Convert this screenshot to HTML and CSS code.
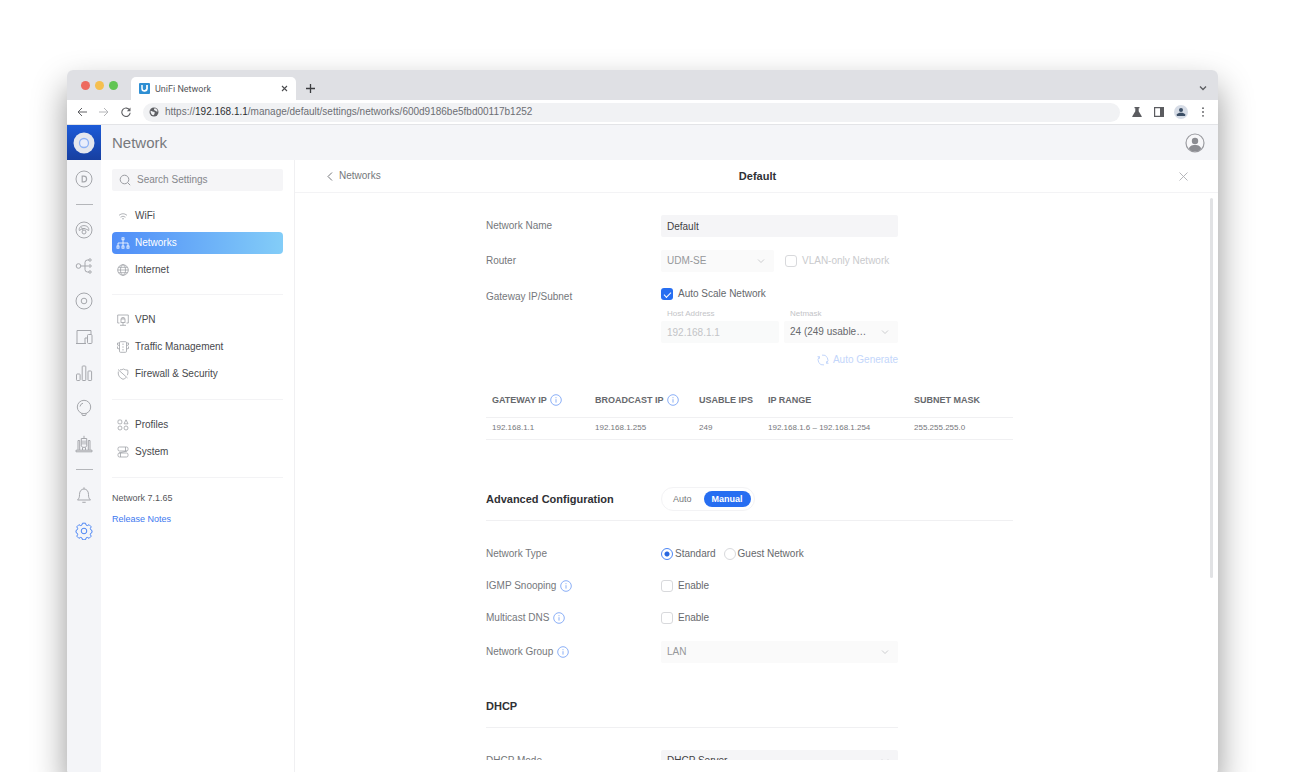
FILE: index.html
```html
<!DOCTYPE html>
<html lang="en">
<head>
  <meta charset="UTF-8">
  <meta name="viewport" content="width=device-width, initial-scale=1.0">
  <title>UniFi Network</title>
  <link rel="stylesheet" href="styles.css">
</head>
<body>
  <!-- Shared icons -->
  <svg class="sprite" aria-hidden="true">
    <symbol id="info" viewBox="0 0 12 12">
      <circle cx="6" cy="6" r="5.3" fill="none" stroke="currentColor" stroke-width="0.9"/>
      <path d="M6 5.2v3.4M6 3.2v1" stroke="currentColor" stroke-width="0.9"/>
    </symbol>
    <symbol id="chevron" viewBox="0 0 8 8">
      <path d="M1 2.5l3 3 3-3" fill="none" stroke="currentColor" stroke-width="0.9"/>
    </symbol>
  </svg>

  <div class="window">
    <div class="tabs">
      <div class="lights"><i></i><i></i><i></i></div>
      <div class="tab">
        <svg class="favicon" viewBox="0 0 11 11"><rect width="11" height="11" rx="1" fill="#2f8fd3"/><path d="M3 2v3.500a2.500 2.500 0 0 0 5 0V2" fill="none" stroke="#fff" stroke-width="1.500"/><path d="M8 2v4L5 8" fill="none" stroke="#fff"/></svg>
        <span>UniFi Network</span>
        <button aria-label="Close tab"><svg width="7" height="7" viewBox="0 0 7 7"><path d="M1 1l5 5M6 1L1 6" stroke="#4c4d50" stroke-width="1.100"/></svg></button>
      </div>
      <button class="new-tab" aria-label="New tab"><svg width="9" height="9" viewBox="0 0 9 9"><path d="M4.500 0v9M0 4.500h9" stroke="#3c3d40" stroke-width="1.300"/></svg></button>
      <button class="tab-list" aria-label="Search tabs"><svg width="8" height="8" viewBox="0 0 8 8"><path d="M1 2.500l3 3 3-3" fill="none" stroke="#5b5c60" stroke-width="1.300"/></svg></button>
    </div>

    <div class="toolbar">
      <button aria-label="Back"><svg viewBox="0 0 10 10"><path d="M10 5H1M5 1L1 5l4 4" fill="none" stroke="#606165"/></svg></button>
      <button aria-label="Forward"><svg viewBox="0 0 10 10"><path d="M0 5h9M5 1l4 4-4 4" fill="none" stroke="#b4b5b8"/></svg></button>
      <button aria-label="Reload"><svg viewBox="0 0 10 10"><path d="M8.700 3.200A4.200 4.200 0 1 0 9.200 5.800" fill="none" stroke="#606165" stroke-width="1.100"/><path d="M9.500 .5v3.700H5.800z" fill="#606165"/></svg></button>
      <div class="address">
        <svg viewBox="0 0 10 10"><circle cx="5" cy="5" r="4.500" fill="#5f6064"/><path d="M1.500 3.700c1.500 0 2 1.100 3.300 1.100S6 7 4.500 8.300C3 8 1.500 6.500 1.500 3.700zM5.500 1.200c1.800.2 3 1.600 3.100 3.200-1.300.4-1.900-.5-2.600-.9S4.500 3 5.500 1.200z" fill="#f1f2f4"/></svg>
        <span>https://<b>192.168.1.1</b>/manage/default/settings/networks/600d9186be5fbd00117b1252</span>
      </div>
      <div class="extras">
        <button aria-label="Labs"><svg viewBox="0 0 10 10"><path d="M2.500 0h5v1.200h-.8v3L9.700 9.200V10H.3v-.8l3-5v-3h-.8z" fill="#5b5c60"/></svg></button>
        <button aria-label="Side panel"><svg viewBox="0 0 10 10"><path d="M.6.600h8.800v8.800H.6z" fill="none" stroke="#5b5c60" stroke-width="1.200"/><path d="M6 0h4v10H6z" fill="#5b5c60"/></svg></button>
        <button class="profile" aria-label="Profile"><svg viewBox="0 0 10 10"><circle cx="5" cy="3" r="2" fill="#3c4f66"/><path d="M.8 9V7.600C1.500 6.300 3 5.700 5 5.700s3.500.6 4.200 1.900V9z" fill="#3c4f66"/></svg></button>
        <button aria-label="More"><svg viewBox="0 0 10 10"><g fill="#5b5c60"><circle cx="5" cy="1.200" r=".9"/><circle cx="5" cy="5" r=".9"/><circle cx="5" cy="8.800" r=".9"/></g></svg></button>
      </div>
    </div>

    <header class="app-bar">
      <div class="logo"><svg viewBox="0 0 22 22"><circle cx="11" cy="11" r="10.500" fill="#e4e7ee"/><circle cx="11" cy="11" r="4.500" fill="#e9eefb" stroke="#8fb3f5" stroke-width="1.300"/></svg></div>
      <h1>Network</h1>
      <button aria-label="Account"><svg viewBox="0 0 20 20"><circle cx="10" cy="10" r="9" fill="#f7f7f9" stroke="#9b9ca1" stroke-width="1.200"/><circle cx="10" cy="8" r="3.200" fill="#8b8c91"/><path d="M4 16c0-2.500 2.500-4 6-4s6 1.500 6 4c-1.500 1.600-3.600 2.600-6 2.600S5.500 17.600 4 16z" fill="#8b8c91"/></svg></button>
    </header>

    <div class="app">
      <nav class="rail" aria-label="Main">
        <a href="#" aria-label="Site"><svg viewBox="0 0 18 18"><circle cx="9" cy="9" r="8"/><path d="M7.200 6.200h1.600a2.800 2.800 0 0 1 0 5.600H7.200z" stroke-width="1.200"/></svg></a>
        <hr>
        <div class="rail-group">
          <a href="#" aria-label="Dashboard"><svg viewBox="0 0 18 18"><circle cx="9" cy="9" r="8"/><path d="M4.300 9.500C3 3 15 3 13.700 9.500L11.800 8.500M4.300 9.500l2-1.200q2.700-2 5.500.2M6.500 6.300l1.700 3"/><circle cx="9" cy="11" r="2"/></svg></a>
          <a href="#" aria-label="Topology"><svg viewBox="0 0 18 18"><circle cx="3.500" cy="9" r="2.300"/><path d="M6 9h7M14 3h-1.500Q10 3 10 5.500v7Q10 15 12.500 15H14"/><circle cx="15" cy="3" r="1.200"/><circle cx="15" cy="9" r="1.200"/><circle cx="15" cy="15" r="1.200"/></svg></a>
          <a href="#" aria-label="Devices"><svg viewBox="0 0 18 18"><circle cx="9" cy="9" r="8"/><circle cx="9" cy="9" r="2.800"/></svg></a>
          <a href="#" aria-label="Clients"><svg viewBox="0 0 18 18"><path d="M9 15.500H1M2 15.500v-13h14v4M10 15.500V10h3M11 15.500H9"/><rect x="12.500" y="6.500" width="4.500" height="9" rx="1"/></svg></a>
          <a href="#" aria-label="Statistics"><svg viewBox="0 0 18 18"><rect x="1.500" y="10" width="3.600" height="6.500" rx=".7"/><rect x="7.200" y="2" width="3.600" height="14.500" rx=".7"/><rect x="13" y="7" width="3.600" height="9.500" rx=".7"/></svg></a>
          <a href="#" aria-label="Insights"><svg viewBox="0 0 18 18"><circle cx="9" cy="8" r="6.700"/><path d="M5 7.500a4 4 0 0 1 3-3.300M6.500 14.300L7.500 16.500h3l1-2.200"/></svg></a>
          <a href="#" aria-label="Hotspot"><svg viewBox="0 0 18 18"><path d="M1 16.800v-1.600h16v1.600zM6.300 3.500h5.400v7.300L10.500 12.300h-3L6.300 10.800zM9 .8v2.500M8 5.500v4M10 5.500v4M3 15V5.500h1.700V15M15 15V5.500h-1.700V15M7.500 12.500V15M10.500 12.500V15"/></svg></a>
        </div>
        <hr>
        <a href="#" aria-label="Notifications"><svg viewBox="0 0 18 18"><path d="M2.500 14c1.700-1.500 2-3 2-5.500 0-3.300 1.800-5.500 4.500-5.500s4.500 2.200 4.500 5.500c0 2.500.3 4 2 5.500zM9 3V1.300M7.300 16.300h3.400"/></svg></a>
        <a href="#" class="on" aria-label="Settings"><svg viewBox="0 0 18 18"><circle cx="9" cy="9" r="2.800"/><path d="M7.500 1.200h3l.6 1.900 1.200.5 1.800-.9 2.100 2.100-.9 1.800.5 1.200 1.200.7v2l-1.200.7-.5 1.200.9 1.800-2.100 2.100-1.800-.9-1.200.5-.6 1.900h-3l-.6-1.900-1.200-.5-1.800.9-2.100-2.100.9-1.800-.5-1.200L1 10.500v-2l1.200-.7.5-1.200-.9-1.800 2.100-2.100 1.800.9 1.200-.5z" stroke-linejoin="round"/></svg></a>
      </nav>

      <aside class="sidebar">
        <label class="search">
          <svg viewBox="0 0 12 12"><circle cx="5.500" cy="5.500" r="4.300"/><path d="M8.700 8.700l2.500 2.500"/></svg>
          <input type="text" placeholder="Search Settings" aria-label="Search Settings">
        </label>
        <nav aria-label="Settings">
          <ul>
            <li><a href="#"><svg viewBox="0 0 14 14"><path d="M3 6.300q4-3.200 8 0M4.500 8.200q2.500-2 5 0M6 10q1-.8 2 0"/></svg>WiFi</a></li>
            <li><a href="#" class="selected"><svg viewBox="0 0 14 14"><path d="M7 4v6M2 10V7h10v3"/><rect x="6" y="1.800" width="2" height="2"/><rect x="1" y="10" width="2" height="2.200"/><rect x="6" y="10" width="2" height="2.200"/><rect x="11" y="10" width="2" height="2.200"/></svg>Networks</a></li>
            <li><a href="#"><svg viewBox="0 0 14 14"><circle cx="7" cy="7" r="5.300"/><ellipse cx="7" cy="7" rx="2.500" ry="5.300"/><path d="M1.700 7h10.600M2.500 4.300h9M2.500 9.700h9"/></svg>Internet</a></li>
          </ul>
          <ul>
            <li><a href="#"><svg viewBox="0 0 14 14"><path d="M3.500 10H1.700V2h10.600v8h-1.800M4 12.300h6"/><rect x="5" y="6" width="4" height="3.500"/><path d="M5.800 6V4.600h2.400V6M7 9.500v2.800"/></svg>VPN</a></li>
            <li><a href="#"><svg viewBox="0 0 14 14"><rect x="3.500" y="1.700" width="7" height="10.600" rx="1"/><path d="M3.500 3h-2v2l2 .5M1.500 6.500v2l2 .5M10.500 3h2v2l-2 .5M12.500 6.500v2l-2 .5M7 3.500v1.500M7 6.300v1.500M7 9v1.500"/></svg>Traffic Management</a></li>
            <li><a href="#"><svg viewBox="0 0 14 14"><path d="M4 2.800Q6 3 7.500 2 9 3 11.800 3.200q.5 3-.4 5M10 10.500Q9 11.700 7 12.300 1.500 10 2.300 4.500M2 2.500l9.500 8.500"/></svg>Firewall &amp; Security</a></li>
          </ul>
          <ul>
            <li><a href="#"><svg viewBox="0 0 14 14"><rect x="2" y="2" width="3.800" height="3.800" rx="1"/><path d="M10 1.800l2 4H8z"/><circle cx="4" cy="10" r="2"/><circle cx="10" cy="10" r="2"/></svg>Profiles</a></li>
            <li><a href="#"><svg viewBox="0 0 14 14"><rect x="2" y="2" width="10" height="4" rx="1.500"/><rect x="2" y="8" width="10" height="4" rx="1.500"/><path d="M9.500 2v4M4.500 8v4M11 6L3 8"/></svg>System</a></li>
          </ul>
        </nav>
        <p>Network 7.1.65</p>
        <p><a href="#">Release Notes</a></p>
      </aside>

      <main>
        <div class="panel-head">
          <a href="#"><svg width="6" height="9" viewBox="0 0 6 9"><path d="M5 .5l-4 4 4 4" fill="none" stroke="currentColor"/></svg>Networks</a>
          <h2>Default</h2>
          <button aria-label="Close"><svg width="9" height="9" viewBox="0 0 9 9"><path d="M.5.5l8 8M8.500.5l-8 8" stroke="#aeafb3" stroke-width=".9"/></svg></button>
        </div>

        <div class="scroller">
          <form>
            <div class="row first">
              <label for="name">Network Name</label>
              <input class="field" id="name" type="text" value="Default">
            </div>
            <div class="row router">
              <label for="router">Router</label>
              <div class="pair">
                <div class="select dim"><select id="router" disabled><option>UDM-SE</option></select><svg><use href="#chevron"/></svg></div>
                <label class="check off"><input type="checkbox" disabled>VLAN-only Network</label>
              </div>
            </div>
            <div class="row gateway">
              <span>Gateway IP/Subnet</span>
              <div>
                <label class="check"><input type="checkbox" checked>Auto Scale Network</label>
                <div class="pair subnet">
                  <div class="stack">
                    <label for="host">Host Address</label>
                    <input class="field" id="host" type="text" value="192.168.1.1" disabled>
                  </div>
                  <div class="stack">
                    <label for="mask">Netmask</label>
                    <div class="select"><select id="mask"><option>24 (249 usable…</option></select><svg><use href="#chevron"/></svg></div>
                  </div>
                </div>
                <button class="generate" type="button" disabled><svg width="12" height="12" viewBox="0 0 12 12"><path d="M7 10.900A5 5 0 0 1 2.300 2.700M5 1.100A5 5 0 0 1 9.700 9.300M.5 2.700h2v2M11.500 9.300h-2v-2" fill="none" stroke="currentColor"/></svg>Auto Generate</button>
              </div>
            </div>

            <table>
              <thead>
                <tr>
                  <th class="c-gateway">Gateway IP <svg class="info"><use href="#info"/></svg></th>
                  <th class="c-broadcast">Broadcast IP <svg class="info"><use href="#info"/></svg></th>
                  <th class="c-usable">Usable IPs</th>
                  <th class="c-range">IP Range</th>
                  <th>Subnet Mask</th>
                </tr>
              </thead>
              <tbody>
                <tr>
                  <td>192.168.1.1</td>
                  <td>192.168.1.255</td>
                  <td>249</td>
                  <td>192.168.1.6 – 192.168.1.254</td>
                  <td>255.255.255.0</td>
                </tr>
              </tbody>
            </table>

            <div class="row section">
              <h3>Advanced Configuration</h3>
              <div class="toggle">
                <button type="button">Auto</button>
                <button type="button" class="active">Manual</button>
              </div>
            </div>

            <div class="row tight">
              <span>Network Type</span>
              <div class="radios">
                <label><input type="radio" name="type" checked>Standard</label>
                <label><input type="radio" name="type">Guest Network</label>
              </div>
            </div>
            <div class="row tight">
              <label for="igmp">IGMP Snooping <svg class="info"><use href="#info"/></svg></label>
              <label class="check"><input id="igmp" type="checkbox">Enable</label>
            </div>
            <div class="row tight">
              <label for="mdns">Multicast DNS <svg class="info"><use href="#info"/></svg></label>
              <label class="check"><input id="mdns" type="checkbox">Enable</label>
            </div>
            <div class="row group">
              <label for="group">Network Group <svg class="info"><use href="#info"/></svg></label>
              <div class="select dim"><select id="group" disabled><option>LAN</option></select><svg><use href="#chevron"/></svg></div>
            </div>

            <h3 class="dhcp">DHCP</h3>
            <div class="row">
              <label for="dhcp">DHCP Mode</label>
              <div class="select solid"><select id="dhcp"><option>DHCP Server</option></select><svg><use href="#chevron"/></svg></div>
            </div>
          </form>
          <div class="thumb"></div>
        </div>
      </main>
    </div>
  </div>
</body>
</html>
```
FILE: styles.css
```css
* {
  box-sizing: border-box;
}

body {
  margin: 0;
  height: 100vh;
  overflow: hidden;
  background: #fff;
  color: #75777b;
  font-family: "Liberation Sans", Arial, sans-serif;
  font-size: 10px;
  line-height: 14px;
}

h1, h2, h3, p, ul {
  margin: 0;
  padding: 0;
  list-style: none;
}

a {
  color: inherit;
  text-decoration: none;
}

button, input, select {
  margin: 0;
  padding: 0;
  border: 0;
  background: none;
  color: inherit;
  font: inherit;
}

button {
  display: flex;
  align-items: center;
  justify-content: center;
}

.sprite {
  position: absolute;
  width: 0;
  height: 0;
}

.window {
  display: flex;
  flex-direction: column;
  height: calc(100vh - 67px);
  margin: 70px 72px 0 67px;
  border-radius: 6px;
  overflow: hidden;
  background: #fff;
  box-shadow: 0 17px 34px rgba(0, 0, 0, 0.42);
}

/* Browser chrome */
.tabs {
  display: flex;
  align-items: flex-end;
  flex: 0 0 30px;
  padding: 0 11px 0 14px;
  background: #dfe0e4;
}

.lights {
  display: flex;
  gap: 5px;
  width: 50px;
  padding-bottom: 10px;
}

.lights i {
  width: 9px;
  height: 9px;
  border-radius: 50%;
  background: #ed6a5f;
}

.lights i:nth-child(2) { background: #f5bf4f; }
.lights i:nth-child(3) { background: #62c554; }

.tab {
  display: flex;
  align-items: center;
  gap: 5px;
  width: 165px;
  height: 23px;
  padding: 0 8px;
  border-radius: 5px 5px 0 0;
  background: #fff;
  color: #55565a;
  font-family: Roboto, sans-serif;
  font-size: 9px;
}

.tab button {
  margin-left: auto;
}

.favicon {
  width: 11px;
  height: 11px;
}

.new-tab {
  height: 24px;
  margin-left: 10px;
}

.tab-list {
  height: 24px;
  margin-left: auto;
}

.toolbar {
  display: flex;
  align-items: center;
  gap: 12px;
  flex: 0 0 25px;
  padding: 0 10px;
  border-bottom: 1px solid #e3e4e7;
}

.toolbar svg {
  width: 10px;
  height: 10px;
}

.address {
  display: flex;
  align-items: center;
  gap: 6px;
  flex: 1;
  height: 19px;
  padding-left: 6px;
  border-radius: 10px;
  background: #f1f2f4;
  color: #6c6e73;
}

.address b {
  color: #2d2e32;
  font-weight: 400;
}

.extras {
  display: flex;
  gap: 12px;
}

.profile {
  width: 14px;
  height: 14px;
  margin: -2px;
  border-radius: 50%;
  background: #d6dce6;
}

.app-bar {
  display: flex;
  align-items: center;
  flex: 0 0 35px;
  padding-right: 13px;
  background: #f4f5f8;
}

.app-bar h1 {
  margin-left: 11px;
  color: #77797d;
  font-size: 15px;
  font-weight: 400;
}

.app-bar button {
  margin-left: auto;
}

.app-bar button svg {
  width: 20px;
  height: 20px;
}

.logo {
  display: flex;
  align-items: center;
  justify-content: center;
  width: 34px;
  height: 35px;
  background: linear-gradient(#1d5bd8, #173fa0);
}

.logo svg {
  width: 22px;
  height: 22px;
}

.app {
  display: flex;
  flex: 1;
  min-height: 0;
}

/* Icon rail */
.rail {
  display: flex;
  flex-direction: column;
  align-items: center;
  flex: 0 0 34px;
  padding-top: 10px;
  background: #f4f5f8;
}

.rail svg {
  display: block;
  width: 18px;
  height: 18px;
  fill: none;
  stroke: #a5a7ac;
  stroke-width: 1;
}

.rail hr {
  width: 17px;
  height: 1px;
  margin: 16px 0;
  border: 0;
  background: #b4b6ba;
}

.rail-group {
  display: flex;
  flex-direction: column;
  justify-content: space-between;
  height: 232px;
}

.rail .on {
  margin-top: 18px;
}

.rail .on svg {
  stroke: #4c86f5;
}

/* Settings menu */
.sidebar {
  flex: 0 0 194px;
  padding: 9px 11px;
  border-right: 1px solid #f0f0f2;
}

.search {
  display: flex;
  align-items: center;
  gap: 6px;
  height: 22px;
  padding-left: 7px;
  border-radius: 2px;
  background: #f5f5f7;
}

.search svg {
  width: 12px;
  height: 12px;
  fill: none;
  stroke: #9a9ca1;
}

.search input {
  width: 130px;
}

.search input::placeholder {
  color: #85878c;
  opacity: 1;
}

.sidebar ul {
  display: flex;
  flex-direction: column;
  gap: 5px;
  padding: 14px 0;
  border-bottom: 1px solid #f3f3f5;
}

.sidebar ul:first-child {
  padding-bottom: 13px;
}

.sidebar li a {
  display: flex;
  align-items: center;
  gap: 5px;
  height: 22px;
  padding-left: 4px;
  border-radius: 4px;
  color: #48494d;
}

.sidebar li svg {
  width: 14px;
  height: 14px;
  fill: none;
  stroke: #a0a2a7;
  stroke-width: 0.8;
}

.sidebar li .selected {
  background: linear-gradient(90deg, #4f8df8, #83cdf8);
  color: #fff;
}

.sidebar li .selected svg {
  stroke: #fff;
}

.sidebar p {
  margin-top: 13px;
  font-size: 9px;
  color: #55565a;
}

.sidebar p + p {
  margin-top: 7px;
}

.sidebar p a {
  color: #3d78f0;
}

/* Content */
main {
  display: flex;
  flex-direction: column;
  flex: 1;
  min-width: 0;
  padding-bottom: 15px;
}

.panel-head {
  display: grid;
  grid-template-columns: 1fr auto 1fr;
  align-items: center;
  flex: 0 0 33px;
  padding: 0 30px 0 32px;
  border-bottom: 1px solid #f3f3f5;
}

.panel-head a {
  display: flex;
  align-items: center;
  gap: 6px;
}

.panel-head h2 {
  color: #303135;
  font-size: 11px;
  font-weight: 700;
}

.panel-head button {
  justify-self: end;
}

.scroller {
  position: relative;
  flex: 1;
  overflow: hidden;
  padding-right: 14px;
}

.thumb {
  position: absolute;
  top: 5px;
  right: 5px;
  width: 3px;
  height: 67%;
  border-radius: 2px;
  background: #e1e2e4;
}

form {
  max-width: 527px;
  margin: 0 auto;
}

.row {
  display: grid;
  grid-template-columns: 175px 237px;
  align-items: center;
}

.first {
  padding-top: 22px;
}

.router {
  margin-top: 13px;
}

.gateway {
  align-items: start;
  margin-top: 15px;
}

.gateway > span {
  padding-top: 3px;
}

.field,
.select {
  width: 100%;
  height: 22px;
  border-radius: 2px;
  background: #f5f5f7;
  color: #3f4044;
}

.field {
  padding: 0 6px;
}

.field:disabled {
  background: #f9fafa;
  color: #c3c4c7;
}

.select {
  position: relative;
  background: #fafafa;
  color: #66686c;
}

.select select {
  width: 100%;
  height: 22px;
  padding: 0 6px;
  appearance: none;
  opacity: 1;
}

.select svg {
  position: absolute;
  top: 7px;
  right: 9px;
  width: 8px;
  height: 8px;
  color: #c6c7ca;
  pointer-events: none;
}

.dim {
  color: #96989b;
}

.solid {
  background: #f5f5f7;
  color: #3f4044;
}

.pair {
  display: grid;
  grid-template-columns: 113px 1fr;
  gap: 11px;
}

.subnet {
  grid-template-columns: 118px 1fr;
  gap: 5px;
  margin-top: 6px;
}

.stack label {
  display: block;
  padding-left: 6px;
  color: #c3c4c7;
  font-size: 8px;
}

.check,
.radios label {
  display: flex;
  align-items: center;
  gap: 5px;
  color: #66686c;
}

.check input,
.radios input {
  flex: none;
  width: 12px;
  height: 12px;
  appearance: none;
  border: 1px solid #d8d9dc;
  border-radius: 3px;
  background: #fff;
}

.check input:checked {
  border: 0;
  background: #276ef1;
}

.check input:checked::before {
  content: "";
  display: block;
  width: 6px;
  height: 3px;
  margin: 4px 3px;
  border: solid #fff;
  border-width: 0 0 1px 1px;
  transform: rotate(-45deg);
}

.off {
  color: #c9cacd;
}

.radios {
  display: flex;
  gap: 8px;
}

.radios label {
  gap: 2px;
}

.radios input {
  border-radius: 50%;
}

.radios input:checked {
  border-color: #4c86f5;
  background: radial-gradient(circle, #2767e0 2px, #fff 3px);
}

.generate {
  gap: 4px;
  margin: 10px 0 0 auto;
  color: #c3d6fb;
}

.info {
  width: 12px;
  height: 12px;
  margin-left: 1px;
  color: #7ea6f5;
  vertical-align: -3px;
}

table {
  width: 100%;
  margin-top: 16px;
  border-collapse: collapse;
  table-layout: fixed;
}

th, td {
  padding: 0 0 0 6px;
  border-bottom: 1px solid #f0f0f2;
  text-align: left;
  white-space: nowrap;
}

th {
  height: 34px;
  color: #66686c;
  font-size: 9px;
  text-transform: uppercase;
}

td {
  height: 22px;
  font-size: 8px;
}

.c-gateway { width: 103px; }
.c-broadcast { width: 104px; }
.c-usable { width: 69px; }
.c-range { width: 146px; }

h3 {
  color: #303135;
  font-size: 11px;
  font-weight: 700;
}

.section {
  margin: 47px 0 17px;
  padding-bottom: 9px;
  border-bottom: 1px solid #f0f0f2;
}

.toggle {
  display: flex;
  justify-self: start;
  padding: 3px;
  border: 1px solid #f3f3f5;
  border-radius: 12px;
}

.toggle button {
  height: 16px;
  padding: 0 8px;
  border-radius: 8px;
  font-size: 9px;
}

.toggle button:first-child {
  margin-right: 4px;
}

.toggle .active {
  background: #276ef1;
  color: #fff;
  font-weight: 700;
}

.tight {
  height: 32px;
}

.group {
  margin-top: 7px;
}

.dhcp {
  width: 412px;
  margin: 36px 0 22px;
  padding-bottom: 14px;
  border-bottom: 1px solid #f0f0f2;
}
```
